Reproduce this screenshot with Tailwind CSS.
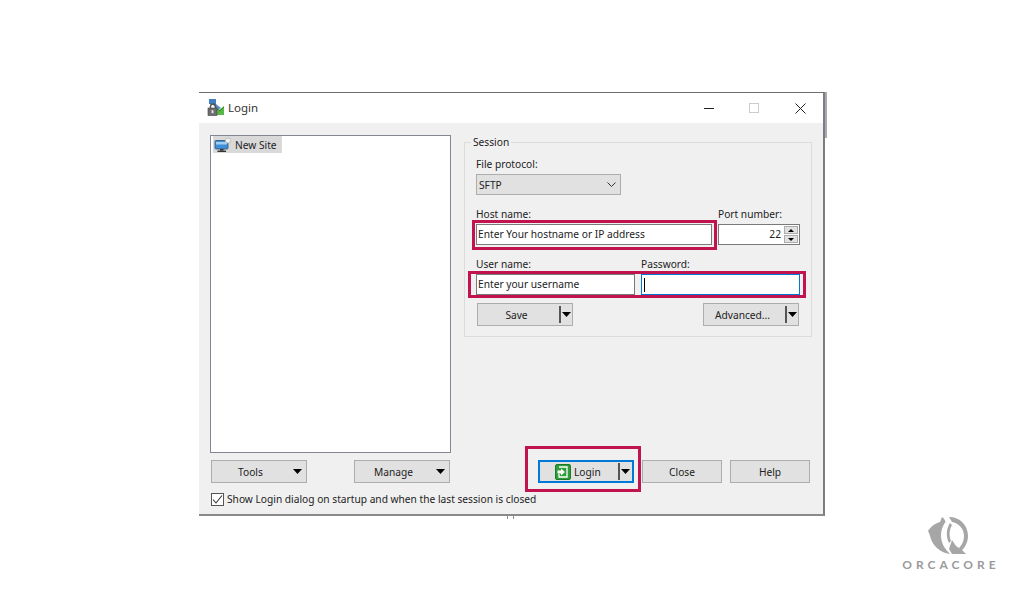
<!doctype html>
<html><head><meta charset="utf-8"><script src="https://cdn.jsdelivr.net/npm/@tailwindcss/browser@4"></script></head>
<body class="bg-white">
<div class="relative w-[1024px] h-[600px] overflow-hidden bg-white font-['Noto_Sans',sans-serif] text-[10.2px] leading-[14px] text-[#222]">

<!-- sliver of the window behind -->
<div class="absolute left-[824px] top-[92px] w-[3px] h-[46px] bg-[#a9a9b5]"></div>
<div class="absolute left-[507px] top-[514px] w-[7px] h-[5px] border-x border-x-[#8a8a8a]"></div>

<!-- window -->
<div class="absolute left-[199px] top-[92px] w-[626px] h-[424px] flex flex-col bg-[#f0f0f0] border-t border-t-[#6e6e6e] border-r-2 border-r-[#7d7d7d] border-b-2 border-b-[#8a8a8a]">
  <!-- title bar -->
  <div class="h-[30px] bg-white flex items-center pl-[8px]">
    <svg width="18" height="18" viewBox="0 0 18 18" class="mr-[3px]">
      <path d="M2 0h7v5H2z" fill="#3f7fc4"/><path d="M5 5l4 0 5 4-3 2z" fill="#5c8fcb"/>
      <path d="M9 9l3 2 5-4v9H9z" fill="#58b947"/><path d="M9 9l4 3 4-4" fill="none" stroke="#2f8a2a" stroke-width="1"/>
      <path d="M3.500 9V7.500a2.500 2.500 0 0 1 5 0V9" fill="none" stroke="#555" stroke-width="1.400"/>
      <rect x="1" y="9" width="9" height="7.500" fill="#6d6d6d" stroke="#444" stroke-width=".6"/><rect x="4.600" y="11.200" width="1.800" height="3" fill="#eee"/>
    </svg>
    <span class="text-[11.5px] text-[#333]">Login</span>
    <div class="ml-auto flex items-center h-full">
      <div class="w-[10px] h-px bg-[#222] mr-[35px]"></div>
      <div class="w-[10px] h-[10px] border border-[#ccc] mr-[36px]"></div>
      <svg width="11" height="11" viewBox="0 0 11 11" class="mr-[17px]"><path d="M.5.5l10 10M10.500.5l-10 10" stroke="#222" stroke-width="1" fill="none"/></svg>
    </div>
  </div>

  <!-- body -->
  <div class="flex-1 flex pl-[11px] pt-[12px]">
    <!-- left column -->
    <div class="w-[241px] flex flex-col">
      <div class="h-[318px] bg-white border border-[#828790] pl-[2px]">
        <div class="w-[69px] h-[17px] bg-[#d9d9d9] flex items-center">
          <svg width="18" height="16" viewBox="0 0 18 16" class="ml-[1px] mr-[3px] shrink-0">
            <rect x="1" y="3.500" width="13" height="8.500" rx="1" fill="#3f8fd8" stroke="#34506e" stroke-width=".8"/>
            <path d="M2 5h11v2.500H2z" fill="#9fd0f3"/><rect x="6" y="12" width="3.500" height="1.600" fill="#333"/><rect x="3.500" y="13.600" width="8.500" height="1.300" fill="#222"/>
            <circle cx="14" cy="3.500" r="2.600" fill="#f2f2f2" stroke="#b5b5b5" stroke-width=".8"/>
          </svg>
          <span>New Site</span>
        </div>
      </div>
      <div class="flex justify-between mt-[7px] px-[1px]">
        <div class="w-[96px] h-[23px] bg-[#e1e1e1] border border-[#adadad] flex items-center">
          <span class="w-[77px] text-center">Tools</span>
          <svg width="9" height="5" viewBox="0 0 9 5" class="ml-[4px]"><path d="M0 0h9L4.500 5z" fill="#000"/></svg>
        </div>
        <div class="w-[96px] h-[23px] bg-[#e1e1e1] border border-[#adadad] flex items-center">
          <span class="w-[77px] text-center">Manage</span>
          <svg width="9" height="5" viewBox="0 0 9 5" class="ml-[4px]"><path d="M0 0h9L4.500 5z" fill="#000"/></svg>
        </div>
      </div>
      <div class="flex items-center mt-[9px] pl-[1px] whitespace-nowrap">
        <div class="w-[13px] h-[13px] bg-white border border-[#555] flex items-center justify-center mr-[3px] shrink-0">
          <svg width="11" height="11" viewBox="0 0 11 11"><path d="M1 5.500l3 3.500 6-7.500" fill="none" stroke="#333" stroke-width="1.100"/></svg>
        </div>
        <span>Show Login dialog on startup and when the last session is closed</span>
      </div>
    </div>

    <!-- right column -->
    <div class="ml-[13px] w-[347px] flex flex-col">
      <fieldset class="h-[202px] border border-[#dcdcdc] px-[11px] block">
        <legend class="ml-[-5px] px-[2px]">Session</legend>
        <div class="mt-[8px]">File protocol:</div>
        <div class="mt-[3px] w-[145px] h-[21px] bg-[#e1e1e1] border border-[#adadad] flex items-center pl-[2px] pr-[3px]">
          <span>SFTP</span>
          <svg width="9" height="5" viewBox="0 0 9 5" class="ml-auto mr-[1px]"><path d="M.5.500l4 4 4-4" fill="none" stroke="#333" stroke-width="1"/></svg>
        </div>
        <div class="flex mt-[12px]">
          <div class="w-[242px]">
            <div>Host name:</div>
            <div class="mt-[3px] w-[236px] h-[21px] bg-white border border-[#7a7a7a] flex items-center pl-[1px] pb-[2px]">Enter Your hostname or IP address</div>
          </div>
          <div>
            <div>Port number:</div>
            <div class="mt-[3px] w-[82px] h-[21px] bg-white border border-[#7a7a7a] flex items-center justify-end pr-[1px]">
              <span class="mr-[3px] mb-[2px]">22</span>
              <div class="w-[14px] h-[17px] flex flex-col gap-px">
                <div class="flex-1 bg-[#e1e1e1] border border-[#adadad] flex items-center justify-center"><svg width="6" height="3" viewBox="0 0 6 3"><path d="M0 3h6L3 0z" fill="#000"/></svg></div>
                <div class="flex-1 bg-[#e1e1e1] border border-[#adadad] flex items-center justify-center"><svg width="6" height="3" viewBox="0 0 6 3"><path d="M0 0h6L3 3z" fill="#000"/></svg></div>
              </div>
            </div>
          </div>
        </div>
        <div class="flex mt-[12px]">
          <div class="w-[165px]">
            <div>User name:</div>
            <div class="mt-[3px] w-[159px] h-[21px] bg-white border border-[#7a7a7a] flex items-center pl-[1px] pb-[2px]">Enter your username</div>
          </div>
          <div>
            <div>Password:</div>
            <div class="mt-[3px] w-[159px] h-[21px] bg-white border border-[#0078d7] flex items-center pl-[2px]"><div class="w-px h-[14px] bg-black"></div></div>
          </div>
        </div>
        <div class="flex justify-between mt-[8px] px-[1px]">
          <div class="w-[96px] h-[23px] bg-[#e1e1e1] border border-[#adadad] flex items-center">
            <span class="w-[77px] text-center">Save</span>
            <div class="w-[2px] h-[17px] bg-[#555] ml-[4px]"></div>
            <svg width="9" height="5" viewBox="0 0 9 5" class="ml-[1px]"><path d="M0 0h9L4.500 5z" fill="#000"/></svg>
          </div>
          <div class="w-[96px] h-[23px] bg-[#e1e1e1] border border-[#adadad] flex items-center">
            <span class="w-[77px] text-center">Advanced...</span>
            <div class="w-[2px] h-[17px] bg-[#555] ml-[4px]"></div>
            <svg width="9" height="5" viewBox="0 0 9 5" class="ml-[1px]"><path d="M0 0h9L4.500 5z" fill="#000"/></svg>
          </div>
        </div>
      </fieldset>
      <div class="flex-1"></div>
      <div class="flex mb-[31px] pl-[74px] gap-[8px]">
        <div class="w-[96px] h-[23px] bg-[#e1e1e1] border-2 border-[#0078d7] flex items-center">
          <svg width="16" height="16" viewBox="0 0 16 16" class="ml-[15px] mr-[3px] shrink-0">
            <rect x=".5" y=".5" width="15" height="15" rx="1.500" fill="#2e9e3a" stroke="#1e7a2a"/>
            <path d="M4 3h8v10H4v-3" fill="none" stroke="#fff" stroke-width="1.300"/>
            <path d="M2.500 6.500H6V4.500L10 8 6 11.500V9.500H2.500z" fill="#fff"/>
          </svg>
          <span>Login</span>
          <div class="w-[2px] h-[17px] bg-[#555] ml-auto"></div>
          <svg width="9" height="5" viewBox="0 0 9 5" class="ml-[1px] mr-[2px]"><path d="M0 0h9L4.500 5z" fill="#000"/></svg>
        </div>
        <div class="w-[80px] h-[23px] bg-[#e1e1e1] border border-[#adadad] flex items-center justify-center">Close</div>
        <div class="w-[80px] h-[23px] bg-[#e1e1e1] border border-[#adadad] flex items-center justify-center">Help</div>
      </div>
    </div>
  </div>
</div>

<!-- red highlight rectangles -->
<div class="absolute left-[472px] top-[220px] w-[245px] h-[30px] border-[3px] border-[#c0134f]"></div>
<div class="absolute left-[468px] top-[271px] w-[338px] h-[27px] border-[3px] border-[#c0134f]"></div>
<div class="absolute left-[525px] top-[446px] w-[116px] h-[46px] border-[3px] border-[#c0134f]"></div>

<!-- watermark logo -->
<div class="absolute left-[900px] top-[517px] w-[98px] flex flex-col items-center">
  <svg width="40" height="38" viewBox="0 0 40 38" class="mr-[2px]">
    <path d="M0 14C3 9 8 6 12 5L14 0C16 1 17 3 17.500 5 13 11 12 18 14 25 15 29 18 33 22 37 12 36 4 28 2 19 1.500 17 .8 15.500 0 14z" fill="#a6a6a6"/>
    <path d="M21 0C32 0 40 8 40 19 40 25 37 31 33 34L31 31C34 28 36 24 36 19 36 11 30 6 24 5z" fill="#a6a6a6"/>
    <path d="M22 6C18 12 18 20 21 26L23 24C21 19 21 13 24 8z" fill="#a6a6a6"/>
    <path d="M24 23L28 29 34 33 38 37 24 37 21 32z" fill="#a6a6a6"/>
  </svg>
  <div class="text-[12px] leading-[12px] tracking-[4px] text-[#9a9a9a] font-['Lato',sans-serif] font-bold mt-[4px] ml-[4px]">ORCACORE</div>
</div>
</div>
</body></html>
